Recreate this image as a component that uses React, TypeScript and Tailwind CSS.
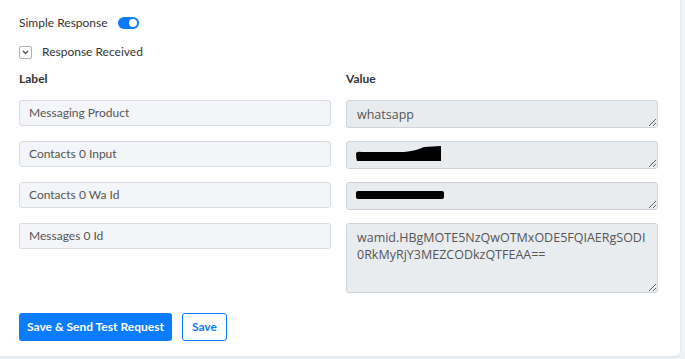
import React from 'react';

const rows = [
  { label: 'Messaging Product', value: 'whatsapp', blob: null as null | 'wave' | 'bar', tall: false },
  { label: 'Contacts 0 Input', value: '', blob: 'wave' as const, tall: false },
  { label: 'Contacts 0 Wa Id', value: '', blob: 'bar' as const, tall: false },
  {
    label: 'Messages 0 Id',
    value: 'wamid.HBgMOTE5NzQwOTMxODE5FQIAERgSODI\n0RkMyRjY3MEZCODkzQTFEAA==',
    blob: null,
    tall: true,
  },
];

// scribbled-out values
const Redacted = ({ kind }: { kind: 'wave' | 'bar' }) =>
  kind === 'wave' ? (
    <svg className="absolute left-[10px] top-[5px]" width="86" height="16" viewBox="0 0 86 16">
      <path d="M0 7 Q2 5 6 6 L48 6 Q60 5 68 1 L85 0 L85 15 L1 15 Q0 12 0 7 Z" fill="#000" />
    </svg>
  ) : (
    <svg className="absolute left-[10px] top-[9px]" width="89" height="9" viewBox="0 0 89 9">
      <rect x="0" y="0" width="88" height="8" rx="2" fill="#000" />
    </svg>
  );

export default function App() {
  return (
    <div className="w-[685px] h-[359px] overflow-hidden bg-[#eef1f5] font-['Lato',sans-serif]">
      <div className="w-[680px] h-[356px] bg-white rounded-br-[5px] shadow-[0_1px_3px_rgba(0,0,0,0.08)] pl-[19px] pr-[22px] pt-[14px]">
        <div className="flex items-center h-[18px] gap-[10px]">
          <span className="text-[12px] text-[#333]">Simple Response</span>
          <div className="w-[21px] h-[12px] rounded-full bg-[#0b7bff] flex items-center justify-end pr-[2px]">
            <div className="w-[8px] h-[8px] rounded-full bg-white" />
          </div>
        </div>

        <div className="flex items-center h-[18px] mt-[11px] gap-[10px]">
          <div className="w-[13px] h-[13px] rounded-[2px] border border-[#a9b0b8] flex items-center justify-center">
            <svg width="7" height="5" viewBox="0 0 7 5">
              <path d="M1 1 L3.5 3.5 L6 1" fill="none" stroke="#444" strokeWidth="1.2" />
            </svg>
          </div>
          <span className="text-[12px] text-[#333]">Response Received</span>
        </div>

        <div className="grid grid-cols-2 gap-x-[15px] mt-[10px]">
          <div className="h-[16px] text-[12px] font-bold text-[#333] leading-[16px]">Label</div>
          <div className="h-[16px] text-[12px] font-bold text-[#333] leading-[16px]">Value</div>
        </div>

        <div className="flex flex-col gap-[13px] mt-[13px]">
          {rows.map((r) => (
            <div key={r.label} className="grid grid-cols-2 gap-x-[15px] items-start">
              <div className="h-[26px] rounded-[3px] border border-[#d8dde3] bg-[#f3f5f8] px-[9px] flex items-center text-[12px] text-[#555]">
                {r.label}
              </div>
              <div className="relative">
                <textarea
                  readOnly
                  value={r.value}
                  className={`w-full block rounded-[3px] border border-[#ced4da] bg-[#e9ecef] px-[10px] pt-[5px] text-[12.5px] leading-[17px] text-[#555] font-['Open_Sans',sans-serif] outline-none resize-y ${
                    r.tall ? 'h-[70px]' : 'h-[28px]'
                  }`}
                />
                {r.blob && <Redacted kind={r.blob} />}
              </div>
            </div>
          ))}
        </div>

        <div className="flex gap-[10px] mt-[20px]">
          <button className="h-[28px] px-[8px] rounded-[3px] bg-[#0a7cff] text-white text-[12px] font-bold">
            Save &amp; Send Test Request
          </button>
          <button className="h-[28px] px-[9px] rounded-[3px] border border-[#0a7cff] bg-white text-[#0a7cff] text-[12px] font-bold">
            Save
          </button>
        </div>
      </div>
    </div>
  );
}
